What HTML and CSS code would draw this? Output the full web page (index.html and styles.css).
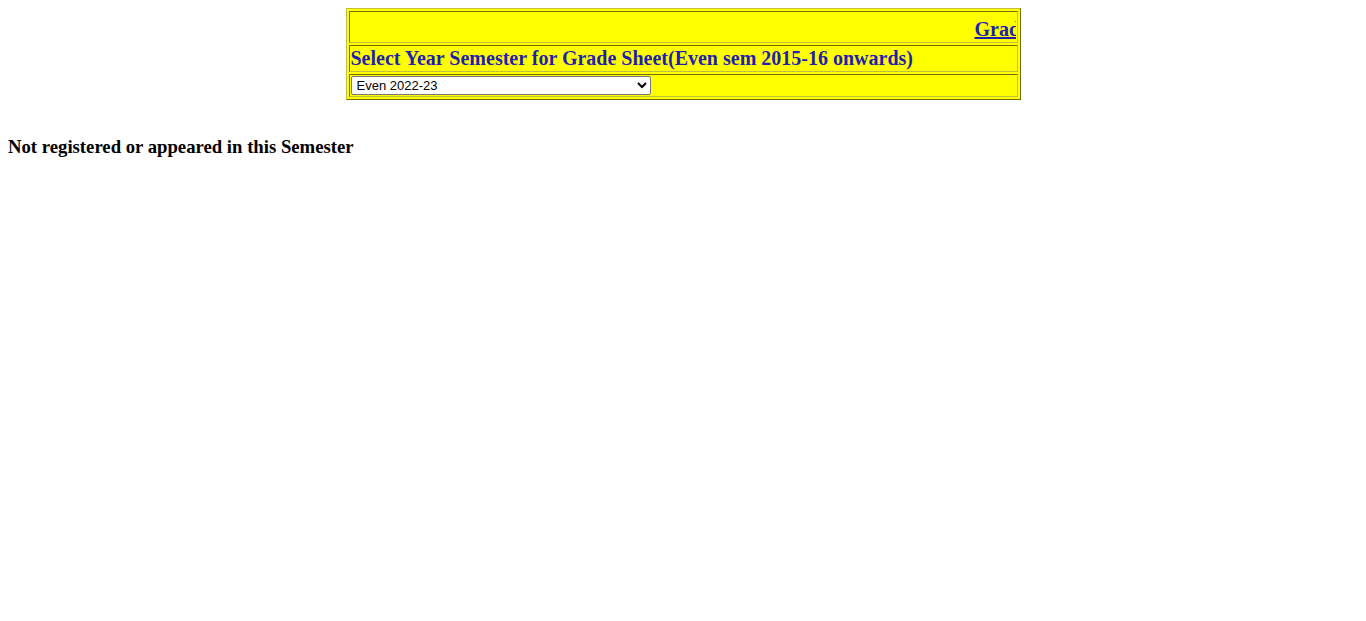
FILE: index.html
```html
<!DOCTYPE html>
<html>
<head>
<meta charset="utf-8">
<title>Grade Sheet</title>
<link rel="stylesheet" href="styles.css">
</head>
<body>
<table class="sheet">
  <tr>
    <td class="cell">
      <div class="ticker"><a href="#" class="ticker-link">Grade Sheet</a></div>
    </td>
  </tr>
  <tr>
    <td class="cell"><span class="title">Select Year Semester for Grade Sheet(Even sem 2015-16 onwards)</span></td>
  </tr>
  <tr>
    <td class="cell">
      <select class="sem">
        <option>Even 2022-23</option>
        <option>Odd 2022-23</option>
        <option>Even 2021-22</option>
      </select>
    </td>
  </tr>
</table>
<h3 class="notice">Not registered or appeared in this Semester</h3>
</body>
</html>
```
FILE: styles.css
```css
html, body {
  background: #ffffff;
}
body {
  margin: 8px;
  font-family: "Liberation Serif", "Times New Roman", serif;
  color: #000;
}
.sheet {
  width: 50%;
  margin: 0 auto;
  table-layout: fixed;
  background: #ffff00;
  border-collapse: separate;
  border-spacing: 2px;
  border: 1px solid;
  border-color: #c0c040 #70700a #70700a #c0c040;
}
.cell {
  padding: 1px;
  border: 1px solid;
  border-color: #70700a #c0c040 #c0c040 #70700a;
  overflow: hidden;
}
.ticker {
  width: 100%;
  height: 28px;
  overflow: hidden;
  white-space: nowrap;
  box-sizing: border-box;
  padding-top: 5px;
  padding-left: 624px;
  line-height: 23px;
}
.ticker-link {
  font-size: 20px;
  font-weight: bold;
  color: #1f1fb0;
  text-decoration: underline;
}
.title {
  display: block;
  font-size: 20px;
  font-weight: bold;
  line-height: 23px;
  color: #1f1fb0;
  white-space: nowrap;
}
.sem {
  display: block;
  width: 300px;
  height: 19px;
  font-family: "Liberation Sans", Arial, sans-serif;
  font-size: 13px;
  padding: 0 0 0 1px;
  margin: 0;
  border: 1px solid #767676;
  border-radius: 2px;
  background: #fff;
  color: #000;
}
.notice {
  margin: 36px 0 0 0;
  font-size: 18.72px;
  font-weight: bold;
}
```
